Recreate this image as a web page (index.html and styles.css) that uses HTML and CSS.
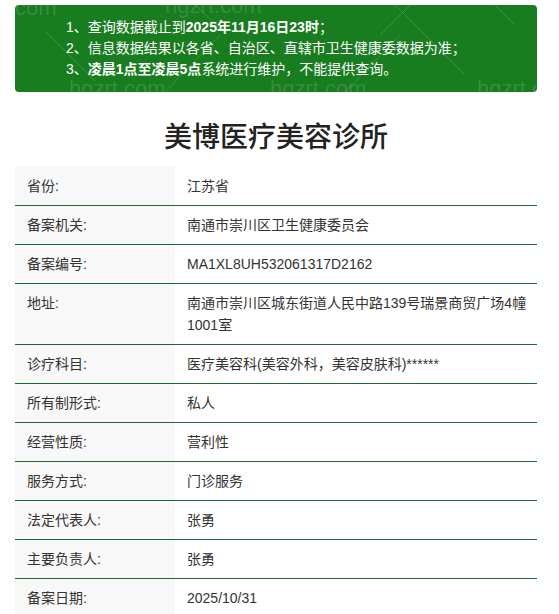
FILE: index.html
```html
<!DOCTYPE html>
<html lang="zh-CN">
<head>
<meta charset="utf-8">
<title>美博医疗美容诊所</title>
<link rel="stylesheet" href="styles.css">
</head>
<body>
<div class="page">
  <div class="notice">
    <p>1、查询数据截止到<b>2025年11月16日23时</b>；</p>
    <p>2、信息数据结果以各省、自治区、直辖市卫生健康委数据为准；</p>
    <p>3、<b>凌晨1点至凌晨5点</b>系统进行维护，不能提供查询。</p>
    <svg class="wm-lines" width="522" height="87" viewBox="0 0 522 87" aria-hidden="true">
      <g stroke="rgba(255,255,255,0.16)" stroke-width="1" fill="none">
        <line x1="30" y1="26" x2="80" y2="76"/>
        <line x1="150" y1="87" x2="205" y2="30"/>
        <line x1="330" y1="87" x2="385" y2="30"/>
        <line x1="380" y1="0" x2="450" y2="70"/>
        <line x1="395" y1="0" x2="365" y2="30"/>
        <line x1="180" y1="0" x2="210" y2="28"/>
        <line x1="480" y1="0" x2="500" y2="20"/>
      </g>
    </svg>
    <span class="wm wm1">com</span>
    <span class="wm wm2">hgzrt.com</span>
    <span class="wm wm3">hgzrt.com</span>
    <span class="wm wm4">hgzrt.com</span>
    <span class="wm wm5">hgzrt.c</span>
  </div>

  <h1 class="title">美博医疗美容诊所</h1>

  <div class="info">
    <div class="row"><div class="label">省份:</div><div class="value">江苏省</div></div>
    <div class="row"><div class="label">备案机关:</div><div class="value">南通市崇川区卫生健康委员会</div></div>
    <div class="row"><div class="label">备案编号:</div><div class="value">MA1XL8UH532061317D2162</div></div>
    <div class="row"><div class="label">地址:</div><div class="value">南通市崇川区城东街道人民中路139号瑞景商贸广场4幢1001室</div></div>
    <div class="row"><div class="label">诊疗科目:</div><div class="value">医疗美容科(美容外科，美容皮肤科)******</div></div>
    <div class="row"><div class="label">所有制形式:</div><div class="value">私人</div></div>
    <div class="row"><div class="label">经营性质:</div><div class="value">营利性</div></div>
    <div class="row"><div class="label">服务方式:</div><div class="value">门诊服务</div></div>
    <div class="row"><div class="label">法定代表人:</div><div class="value">张勇</div></div>
    <div class="row"><div class="label">主要负责人:</div><div class="value">张勇</div></div>
    <div class="row"><div class="label">备案日期:</div><div class="value">2025/10/31</div></div>
  </div>
</div>
</body>
</html>
```

FILE: styles.css
```css
* { box-sizing: border-box; }

html, body {
  margin: 0;
  padding: 0;
  background: #ffffff;
}

body {
  font-family: "Liberation Sans", "Noto Sans CJK SC", sans-serif;
  color: #333333;
}

.page {
  padding: 5px 22px 0 15px;
}

.notice {
  position: relative;
  overflow: hidden;
  background: #187d1f;
  border-radius: 4px;
  padding: 12px 16px 12px 51px;
  color: #ffffff;
  font-size: 14px;
  line-height: 21px;
}

.notice p {
  margin: 0;
  position: relative;
  z-index: 1;
  white-space: nowrap;
}

.notice b {
  font-weight: 700;
}

.wm-lines {
  position: absolute;
  left: 0;
  top: 0;
}

.wm {
  position: absolute;
  font-family: "Liberation Sans", sans-serif;
  font-size: 22px;
  line-height: 22px;
  color: rgba(255, 255, 255, 0.14);
  white-space: nowrap;
}

.wm1 { left: 0; top: -8px; }
.wm2 { left: 150px; top: -10px; }
.wm3 { left: 54px; top: 73px; }
.wm4 { left: 255px; top: 73px; }
.wm5 { left: 462px; top: 73px; }

.title {
  margin: 22px 0 11px;
  text-align: center;
  font-family: "Noto Sans CJK SC", sans-serif;
  font-size: 28px;
  line-height: 42px;
  font-weight: 500;
  color: #222222;
}

.info {
  display: flex;
  flex-direction: column;
}

.row {
  display: grid;
  grid-template-columns: 160px 1fr;
  border-bottom: 1px solid #1b6a33;
  font-size: 14px;
  line-height: 22px;
}

.label {
  background: #f8f8f8;
  padding: 8px 12px;
  color: #333333;
}

.value {
  padding: 8px 8px 8px 12px;
  color: #333333;
}
```
